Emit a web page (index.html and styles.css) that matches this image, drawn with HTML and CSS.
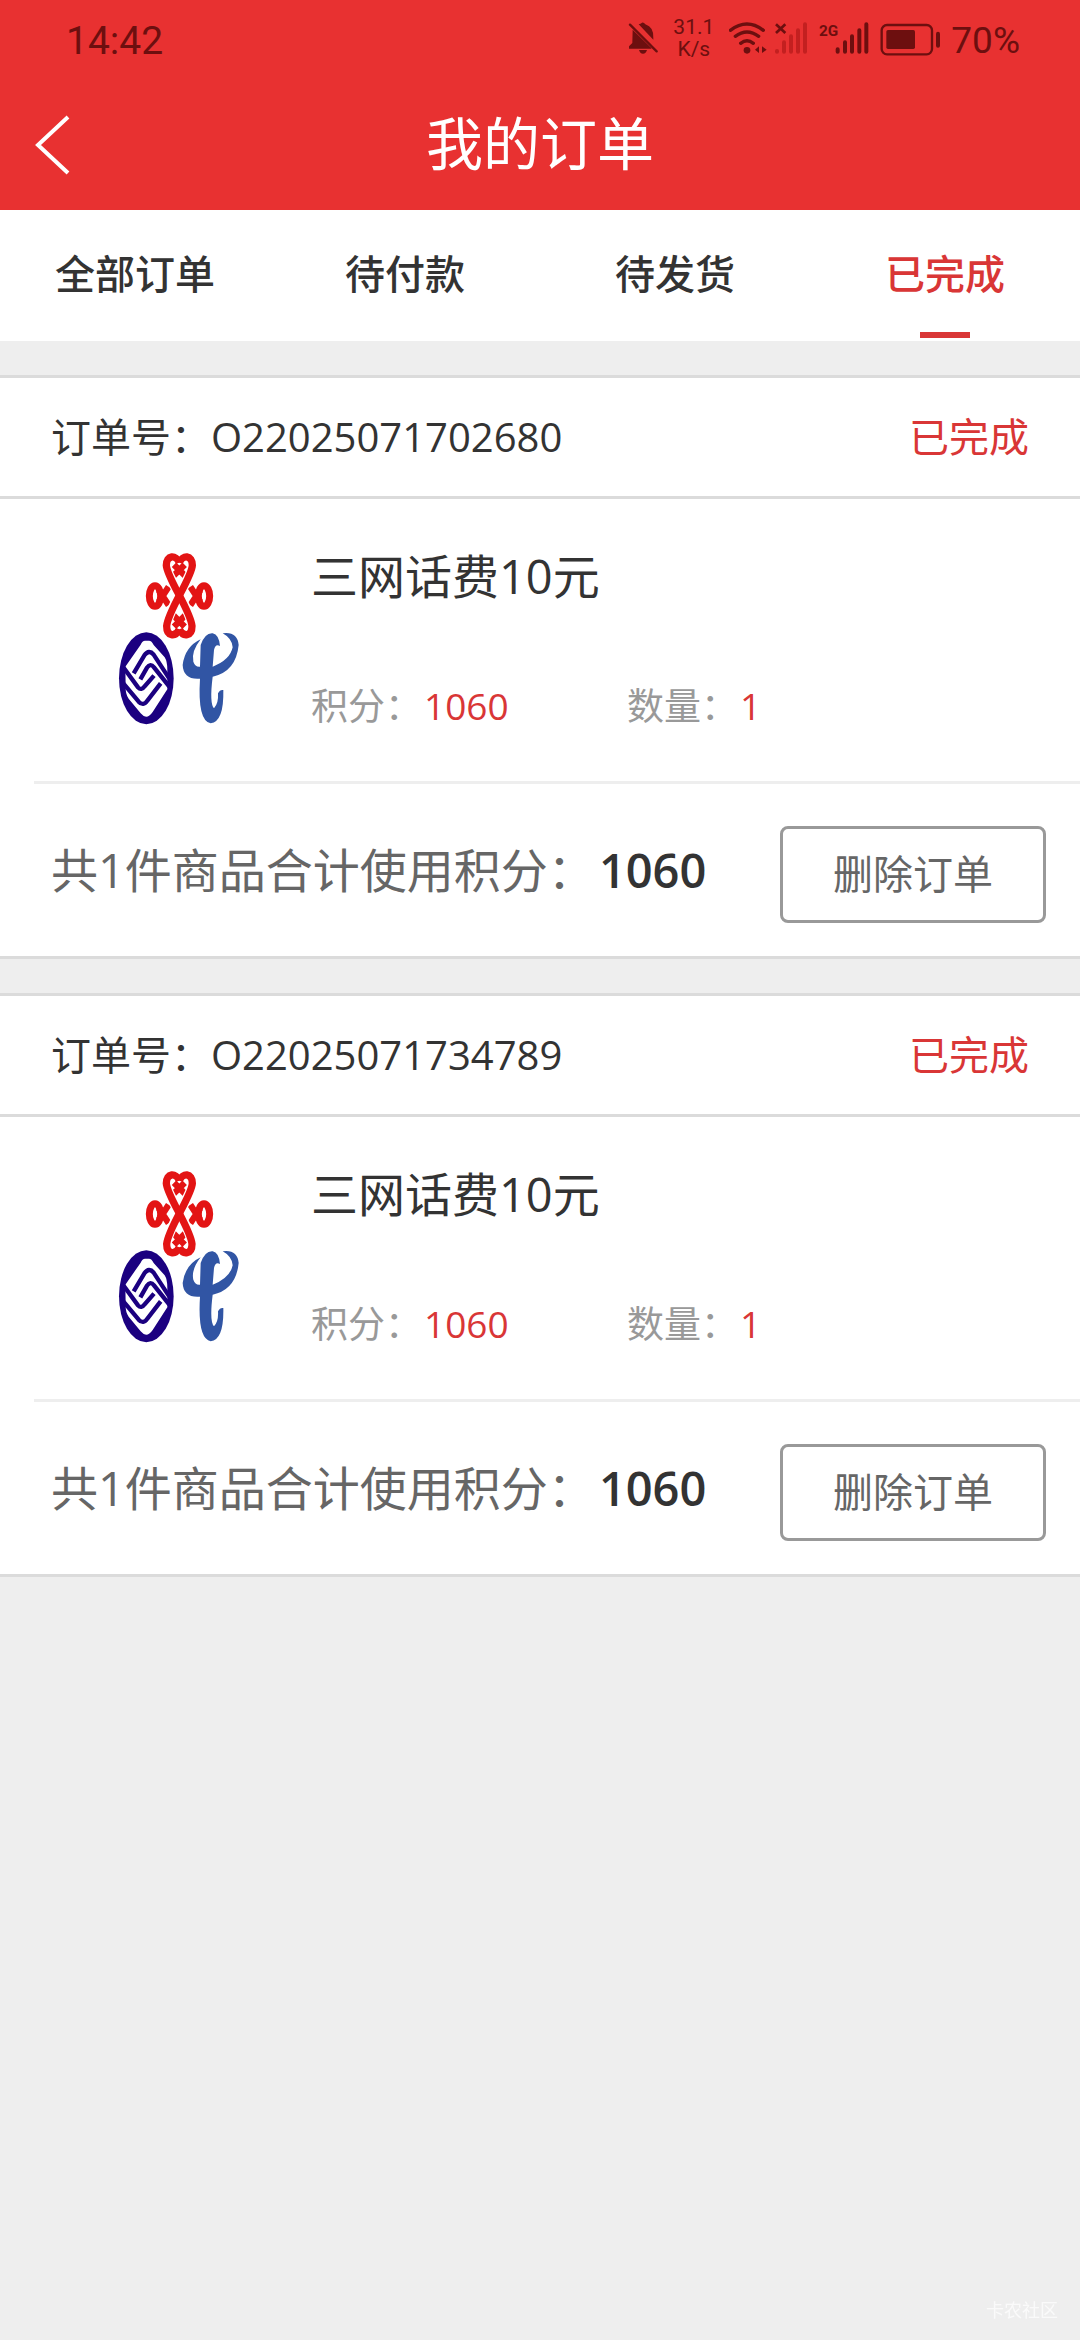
FILE: index.html
```html
<!DOCTYPE html>
<html lang="zh-CN">
<head>
    <meta charset="UTF-8">
    <meta name="viewport" content="width=device-width, initial-scale=1.0">
    <title>我的订单</title>
    <link rel="stylesheet" href="styles.css">
</head>
<body>
    <!-- 运营商图标 -->
    <svg class="sprite" aria-hidden="true">
        <symbol id="carriers" viewBox="0 0 540 660">
            <g fill="none" stroke="#e31414" stroke-width="19">
                <path d="M252 104L286 138M284 104L250 138M252 290L286 256M284 290L250 256"/>
                <ellipse cx="195" cy="198" rx="17" ry="31" stroke-width="21"/>
                <ellipse cx="342" cy="198" rx="17" ry="31" stroke-width="21"/>
                <path d="M206 216L236 170M206 180L236 226M331 216L301 170M331 180L301 226"/>
            </g>
            <g fill="none" stroke-linejoin="round">
                <path d="M232 122C240 150 298 240 304 276M304 122C296 150 238 240 232 276" stroke="#fff" stroke-width="30"/>
                <path d="M268 98C258 74 229 74 229 106C231 144 302 242 306 288C306 320 280 322 268 298" stroke="#e31414" stroke-width="22"/>
                <path d="M268 98C278 74 307 74 307 106C305 144 234 242 230 288C230 320 256 322 268 298" stroke="#e31414" stroke-width="22"/>
            </g>
            <ellipse cx="169" cy="445" rx="82" ry="138" fill="#1b0080"/>
            <path d="M106 410L152 344Q157 332 165 332H177Q185 332 191 345L224 382Q232 394 232 420V478L188 546Q170 572 152 550L116 506Q106 492 107 470Z" fill="#fff"/>
            <g fill="none" stroke="#1b0080" stroke-width="13">
                <path d="M131 430L163 376Q177 357 191 374L238 446"/>
                <path d="M151 448L171 413Q181 398 192 412L238 470"/>
                <path d="M100 412L144 472Q154 483 164 469L192 437"/>
                <path d="M100 460L146 515Q160 530 172 512L212 460"/>
            </g>
            <path d="M332 345Q345 308 368 310Q387 314 390 348Q376 340 372 360L368 410Q420 390 428 352Q426 325 398 310Q442 304 446 345Q438 425 368 440Q358 520 372 535Q386 520 384 490Q390 478 400 480Q402 575 362 580Q322 572 330 446Q280 450 278 405Q285 350 332 328Q303 365 310 395Q316 412 330 410Z" fill="#3155a4"/>
        </symbol>
    </svg>

    <header class="header">
        <div class="status-bar">
            <span class="time">14:42</span>
            <div class="status-icons">
                <svg class="icon-bell" viewBox="84 54 90 114">
                    <path d="M98 86L154 141L154 143H87V136L97 126ZM116 70Q122 68 126 65Q132 64 136 70Q162 78 160 112V116ZM117 147H141Q138 158 129 158Q120 158 117 147Z"/>
                    <path d="M90 71L170 151" fill="none" stroke="#6d0f0f" stroke-width="7" stroke-linecap="round"/>
                </svg>
                <span class="speed">31.1<br>K/s</span>
                <svg class="icon-wifi" viewBox="390 54 114 114">
                    <g fill="none" stroke="#6d0f0f" stroke-width="10" stroke-linecap="round">
                        <path d="M394 88Q444 50 493 88M409 106Q444 80 479 106M425 127Q444 112 463 127"/>
                    </g>
                    <circle cx="444" cy="148" r="10"/>
                    <path d="M468 146L480 136V156ZM503 146L489 136V156Z"/>
                </svg>
                <svg class="icon-signal-off" viewBox="525 54 102 114">
                    <path d="M531 70L559 96M559 70L531 96" fill="none" stroke="#6d0f0f" stroke-width="8"/>
                    <path d="M534 150V152M555 124V152M576 106V152M597 88V152M618 70V152" fill="none" stroke="#c32020" stroke-width="12" stroke-linecap="round"/>
                </svg>
                <svg class="icon-signal" viewBox="660 54 150 114">
                    <text x="660" y="104" class="network">2G</text>
                    <path d="M716 145V152M738 124V152M759 106V152M781 88V152M802 70V152" fill="none" stroke="#6d0f0f" stroke-width="12" stroke-linecap="round"/>
                </svg>
                <svg class="icon-battery" viewBox="843 54 183 114">
                    <rect x="848" y="72" width="151" height="88" rx="16" fill="none" stroke="#6d0f0f" stroke-width="7"/>
                    <rect x="862" y="87" width="86" height="57" rx="5"/>
                    <rect x="1011" y="92" width="12" height="48" rx="6"/>
                </svg>
                <span class="battery">70%</span>
            </div>
        </div>
        <div class="nav">
            <button class="back" type="button" aria-label="返回">
                <svg viewBox="0 0 36 60"><path d="M34 2L4 30L34 58" fill="none" stroke="#fff" stroke-width="4"/></svg>
            </button>
            <h1>我的订单</h1>
        </div>
    </header>

    <nav class="tabs">
        <a href="#all">全部订单</a>
        <a href="#unpaid">待付款</a>
        <a href="#unshipped">待发货</a>
        <a href="#done" class="active">已完成</a>
    </nav>

    <main>
        <section class="order">
            <div class="order-head">
                <span>订单号：O22025071702680</span>
                <span class="red">已完成</span>
            </div>
            <div class="order-item">
                <svg class="goods-img" role="img" aria-label="三网话费"><use href="#carriers"/></svg>
                <div class="goods-info">
                    <h2>三网话费10元</h2>
                    <div class="goods-attr">
                        <span>积分：<em>1060</em></span>
                        <span>数量：<em>1</em></span>
                    </div>
                </div>
            </div>
            <div class="order-foot">
                <span>共1件商品合计使用积分：<strong>1060</strong></span>
                <button class="delete" type="button">删除订单</button>
            </div>
        </section>

        <section class="order">
            <div class="order-head">
                <span>订单号：O22025071734789</span>
                <span class="red">已完成</span>
            </div>
            <div class="order-item">
                <svg class="goods-img" role="img" aria-label="三网话费"><use href="#carriers"/></svg>
                <div class="goods-info">
                    <h2>三网话费10元</h2>
                    <div class="goods-attr">
                        <span>积分：<em>1060</em></span>
                        <span>数量：<em>1</em></span>
                    </div>
                </div>
            </div>
            <div class="order-foot">
                <span>共1件商品合计使用积分：<strong>1060</strong></span>
                <button class="delete" type="button">删除订单</button>
            </div>
        </section>
    </main>

    <div class="watermark">卡农社区</div>
</body>
</html>
```
FILE: styles.css
```css
* {
    box-sizing: border-box;
}
body {
    margin: 0;
    background-color: #eee;
    color: #333;
    font-family: "Open Sans", "Noto Sans CJK SC", sans-serif;
    font-size: 40px;
    line-height: 56px;
}
h1, h2 {
    margin: 0;
    font-weight: normal;
}
button {
    font-family: inherit;
    cursor: pointer;
}
.sprite {
    display: none;
}

/* 顶部 */
.header {
    background-color: #e83131;
}
.status-bar {
    display: flex;
    justify-content: space-between;
    align-items: center;
    height: 76px;
    padding: 0 60px 0 66px;
    color: #6d0f0f;
    font-family: Roboto, sans-serif;
}
.time {
    padding-top: 6px;
    font-size: 39px;
}
.status-icons {
    display: flex;
    align-items: center;
}
.status-icons svg {
    height: 38px;
    fill: #6d0f0f;
}
.icon-bell {
    width: 30px;
}
.speed {
    margin: 0 15px;
    font-size: 21px;
    line-height: 22px;
    text-align: center;
}
.icon-wifi {
    width: 38px;
    margin-right: 7px;
}
.icon-signal-off {
    width: 34px;
    margin-right: 11px;
}
.icon-signal {
    width: 50px;
    margin-right: 11px;
}
.network {
    font-size: 46px;
    font-weight: bold;
}
.icon-battery {
    width: 61px;
    margin-right: 10px;
}
.battery {
    padding-top: 6px;
    font-size: 37px;
}
.nav {
    display: grid;
    grid-template-columns: 1fr auto 1fr;
    align-items: center;
    height: 134px;
    padding: 0 34px;
}
.nav h1 {
    color: #fff;
    font-size: 57px;
    line-height: 80px;
}
.back {
    display: flex;
    justify-self: start;
    padding: 4px 0 0;
    border: none;
    background: none;
}
.back svg {
    width: 36px;
    height: 60px;
}

/* 标签栏 */
.tabs {
    display: flex;
    height: 131px;
    background-color: #fff;
    font-weight: 500;
}
.tabs a {
    position: relative;
    flex: 1;
    color: #333;
    line-height: 128px;
    text-align: center;
    text-decoration: none;
}
.tabs .active {
    color: #d93636;
}
.tabs .active::after {
    content: "";
    position: absolute;
    bottom: 3px;
    left: 50%;
    width: 50px;
    height: 6px;
    margin-left: -25px;
    background-color: #d93636;
}

/* 订单 */
.order {
    margin-top: 34px;
    border-top: 3px solid #dbdbdb;
    border-bottom: 3px solid #dbdbdb;
    background-color: #fff;
}
.order-head {
    display: flex;
    justify-content: space-between;
    align-items: center;
    height: 121px;
    padding: 0 51px;
    border-bottom: 3px solid #dbdbdb;
}
.red {
    color: #d93636;
}
.order-item {
    display: flex;
    gap: 41px;
    margin-left: 34px;
    padding: 31px 34px 31px 56px;
    border-bottom: 3px solid #eee;
}
.goods-img {
    flex: none;
    width: 180px;
    height: 220px;
}
.goods-info {
    display: flex;
    flex-direction: column;
    justify-content: space-between;
    padding: 10px 0 16px;
}
.goods-info h2 {
    font-size: 47px;
    line-height: 72px;
}
.goods-attr {
    display: grid;
    grid-template-columns: 316px auto;
    color: #999;
    font-size: 37px;
}
.goods-attr em {
    margin-left: 2px;
    color: #d93636;
    font-style: normal;
}
.order-foot {
    display: flex;
    justify-content: space-between;
    align-items: center;
    height: 172px;
    padding: 0 34px 0 51px;
    color: #666;
    font-size: 47px;
}
.order-foot strong {
    margin-left: 4px;
    color: #333;
    font-weight: 600;
}
.delete {
    width: 266px;
    height: 97px;
    margin-top: 8px;
    padding: 0 0 4px;
    border: 3px solid #999;
    border-radius: 8px;
    background-color: #fff;
    color: #666;
    font-size: 40px;
}

.watermark {
    position: fixed;
    right: 22px;
    bottom: 16px;
    color: #fafafa;
    font-size: 18px;
    line-height: 28px;
}
```
